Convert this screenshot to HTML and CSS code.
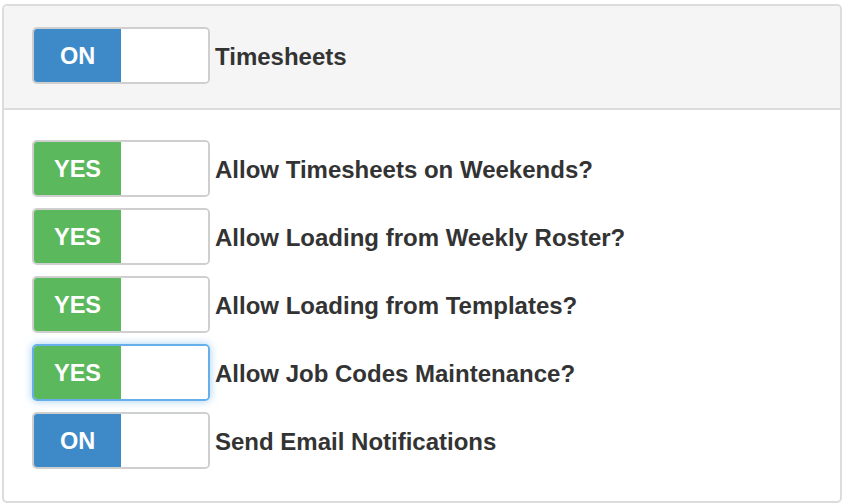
FILE: index.html
```html
<!DOCTYPE html>
<html>
<head>
<meta charset="utf-8">
<link rel="stylesheet" href="styles.css">
</head>
<body>
<div class="panel">
  <div class="panel-heading">
    <div class="row">
      <div class="switch"><span class="on primary">ON</span><span class="off"></span></div>
      <span class="label">Timesheets</span>
    </div>
  </div>
  <div class="panel-body">
    <div class="row">
      <div class="switch"><span class="on success">YES</span><span class="off"></span></div>
      <span class="label">Allow Timesheets on Weekends?</span>
    </div>
    <div class="row">
      <div class="switch"><span class="on success">YES</span><span class="off"></span></div>
      <span class="label">Allow Loading from Weekly Roster?</span>
    </div>
    <div class="row">
      <div class="switch"><span class="on success">YES</span><span class="off"></span></div>
      <span class="label">Allow Loading from Templates?</span>
    </div>
    <div class="row">
      <div class="switch focused"><span class="on success">YES</span><span class="off"></span></div>
      <span class="label">Allow Job Codes Maintenance?</span>
    </div>
    <div class="row">
      <div class="switch"><span class="on primary">ON</span><span class="off"></span></div>
      <span class="label">Send Email Notifications</span>
    </div>
  </div>
</div>
</body>
</html>
```
FILE: styles.css
```css
* { box-sizing: border-box; }
html, body { margin: 0; padding: 0; background: #fff; }
body {
  font-family: "Liberation Sans", Arial, Helvetica, sans-serif;
  color: #333;
}
.panel {
  width: 840px;
  height: 499px;
  margin: 4px 0 0 2px;
  border: 2px solid #dcdcdc;
  border-radius: 5px;
  overflow: hidden;
  display: flex;
  flex-direction: column;
}
.panel-heading {
  background: #f5f5f5;
  border-bottom: 2px solid #dcdcdc;
  padding: 21px 0 24px 28px;
}
.panel-body {
  padding: 30px 0 0 28px;
  display: flex;
  flex-direction: column;
  gap: 11px;
}
.row {
  display: flex;
  align-items: center;
}
.switch {
  width: 178px;
  height: 57px;
  border: 2px solid #cfcfcf;
  border-radius: 5px;
  overflow: hidden;
  display: flex;
  background: #fff;
}
.switch.focused {
  border-color: #66afe9;
  box-shadow: 0 0 8px rgba(102, 175, 233, 0.6);
}
.on {
  width: 87px;
  height: 100%;
  display: flex;
  align-items: center;
  justify-content: center;
  color: #fff;
  font-weight: bold;
  font-size: 23.5px;
  padding-top: 1px;
}
.primary { background: #3e8ac8; }
.success { background: #5cb85c; }
.off { flex: 1; background: #fff; }
.label {
  margin-left: 5px;
  padding-top: 2px;
  font-weight: bold;
  font-size: 24px;
  color: #333;
}
```
